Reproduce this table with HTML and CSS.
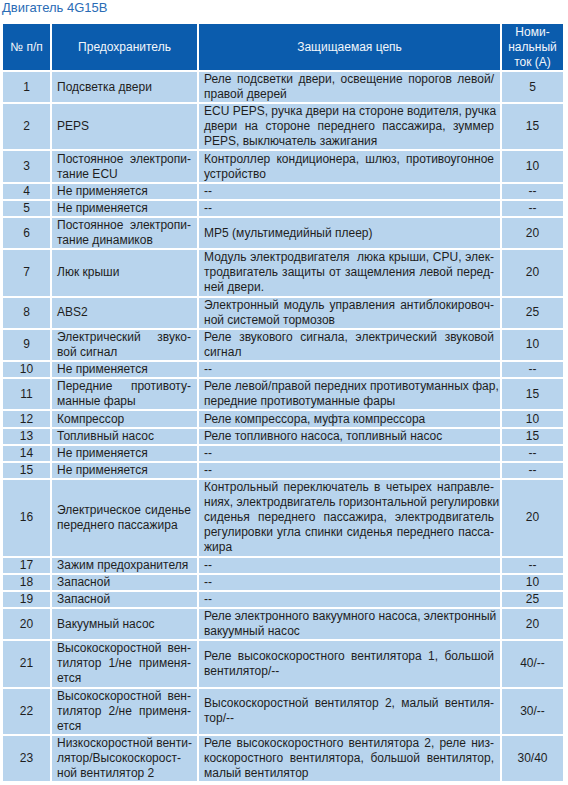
FILE: index.html
```html
<!DOCTYPE html>
<html lang="ru">
<head>
<meta charset="utf-8">
<title>Двигатель 4G15B</title>
<link rel="stylesheet" href="styles.css">
</head>
<body>
<div class="page">
  <h1 class="title">Двигатель 4G15B</h1>
  <table class="fuses">
    <colgroup>
      <col class="c-num"><col class="c-fuse"><col class="c-circ"><col class="c-amp">
    </colgroup>
    <thead>
      <tr>
        <th>№ п/п</th>
        <th>Предохранитель</th>
        <th>Защищаемая цепь</th>
        <th>Номи-<br>нальный<br>ток (А)</th>
      </tr>
    </thead>
    <tbody>
      <tr><td class="n">1</td><td>Подсветка двери</td><td><span class="j">Реле подсветки двери, освещение порогов левой/</span>правой дверей</td><td class="n">5</td></tr>
      <tr><td class="n">2</td><td>PEPS</td><td><span class="j">ECU PEPS, ручка двери на стороне водителя, ручка</span><span class="j">двери на стороне переднего пассажира, зуммер</span>PEPS, выключатель зажигания</td><td class="n">15</td></tr>
      <tr><td class="n">3</td><td><span class="j">Постоянное электропи-</span>тание ECU</td><td><span class="j">Контроллер кондиционера, шлюз, противоугонное</span>устройство</td><td class="n">10</td></tr>
      <tr><td class="n">4</td><td>Не применяется</td><td>--</td><td class="n">--</td></tr>
      <tr><td class="n">5</td><td>Не применяется</td><td>--</td><td class="n">--</td></tr>
      <tr><td class="n">6</td><td><span class="j">Постоянное электропи-</span>тание динамиков</td><td>MP5 (мультимедийный плеер)</td><td class="n">20</td></tr>
      <tr><td class="n">7</td><td>Люк крыши</td><td><span class="j">Модуль электродвигателя&nbsp; люка крыши, CPU, элек-</span><span class="j">тродвигатель защиты от защемления левой перед-</span>ней двери.</td><td class="n">20</td></tr>
      <tr><td class="n">8</td><td>ABS2</td><td><span class="j">Электронный модуль управления антиблокировоч-</span>ной системой тормозов</td><td class="n">25</td></tr>
      <tr><td class="n">9</td><td><span class="j">Электрический звуко-</span>вой сигнал</td><td><span class="j">Реле звукового сигнала, электрический звуковой</span>сигнал</td><td class="n">10</td></tr>
      <tr><td class="n">10</td><td>Не применяется</td><td>--</td><td class="n">--</td></tr>
      <tr><td class="n">11</td><td><span class="j">Передние противоту-</span>манные фары</td><td><span class="j">Реле левой/правой передних противотуманных фар,</span>передние противотуманные фары</td><td class="n">15</td></tr>
      <tr><td class="n">12</td><td>Компрессор</td><td>Реле компрессора, муфта компрессора</td><td class="n">10</td></tr>
      <tr><td class="n">13</td><td>Топливный насос</td><td>Реле топливного насоса, топливный насос</td><td class="n">15</td></tr>
      <tr><td class="n">14</td><td>Не применяется</td><td>--</td><td class="n">--</td></tr>
      <tr><td class="n">15</td><td>Не применяется</td><td>--</td><td class="n">--</td></tr>
      <tr><td class="n">16</td><td><span class="j">Электрическое сиденье</span>переднего пассажира</td><td><span class="j">Контрольный переключатель в четырех направле-</span><span class="j">ниях, электродвигатель горизонтальной регулировки</span><span class="j">сиденья переднего пассажира, электродвигатель</span><span class="j">регулировки угла спинки сиденья переднего пасса-</span>жира</td><td class="n">20</td></tr>
      <tr><td class="n">17</td><td>Зажим предохранителя</td><td>--</td><td class="n">--</td></tr>
      <tr><td class="n">18</td><td>Запасной</td><td>--</td><td class="n">10</td></tr>
      <tr><td class="n">19</td><td>Запасной</td><td>--</td><td class="n">25</td></tr>
      <tr><td class="n">20</td><td>Вакуумный насос</td><td><span class="j">Реле электронного вакуумного насоса, электронный</span>вакуумный насос</td><td class="n">20</td></tr>
      <tr><td class="n">21</td><td><span class="j">Высокоскоростной вен-</span><span class="j">тилятор 1/не применя-</span>ется</td><td><span class="j">Реле высокоскоростного вентилятора 1, большой</span>вентилятор/--</td><td class="n">40/--</td></tr>
      <tr><td class="n">22</td><td><span class="j">Высокоскоростной вен-</span><span class="j">тилятор 2/не применя-</span>ется</td><td><span class="j">Высокоскоростной вентилятор 2, малый вентиля-</span>тор/--</td><td class="n">30/--</td></tr>
      <tr><td class="n">23</td><td><span class="j">Низкоскоростной венти-</span><span class="j">лятор/Высокоскорост-</span>ной вентилятор 2</td><td><span class="j">Реле высокоскоростного вентилятора 2, реле низ-</span><span class="j">коскоростного вентилятора, большой вентилятор,</span>малый вентилятор</td><td class="n">30/40</td></tr>
    </tbody>
  </table>
</div>
</body>
</html>
```

FILE: styles.css
```css
html, body {
  margin: 0;
  padding: 0;
  background: #ffffff;
}

.page {
  padding: 0 5px 0 3px;
  font-family: "Liberation Sans", Arial, sans-serif;
  font-size: 12px;
  color: #1e1e1e;
}

.title {
  margin: 0 0 8px -1px;
  font-size: 13px;
  font-weight: normal;
  line-height: 16px;
  color: #2a6cb5;
}

.fuses {
  width: 560px;
  table-layout: fixed;
  border-collapse: collapse;
}

.c-num { width: 48px; }
.c-fuse { width: 147px; }
.c-circ { width: 303px; }
.c-amp { width: 62px; }

.fuses th,
.fuses td {
  border: 2px solid #ffffff;
  line-height: 15px;
  vertical-align: middle;
  white-space: nowrap;
}

.fuses tr:first-child th { border-top: 0; }
.fuses tr > :first-child { border-left: 0; }
.fuses tr > :last-child { border-right: 0; }

.fuses th {
  background: #0b5cad;
  color: #f2f6fb;
  font-weight: normal;
  text-align: center;
  padding: 1px 0 0;
}

.fuses td {
  background: #b8d4ed;
  padding: 0.12px 6px 0.12px 5px;
  text-align: left;
}

.fuses td.n {
  text-align: center;
  padding: 0.12px 0;
}

.j {
  display: block;
  text-align: justify;
  text-align-last: justify;
}
```
